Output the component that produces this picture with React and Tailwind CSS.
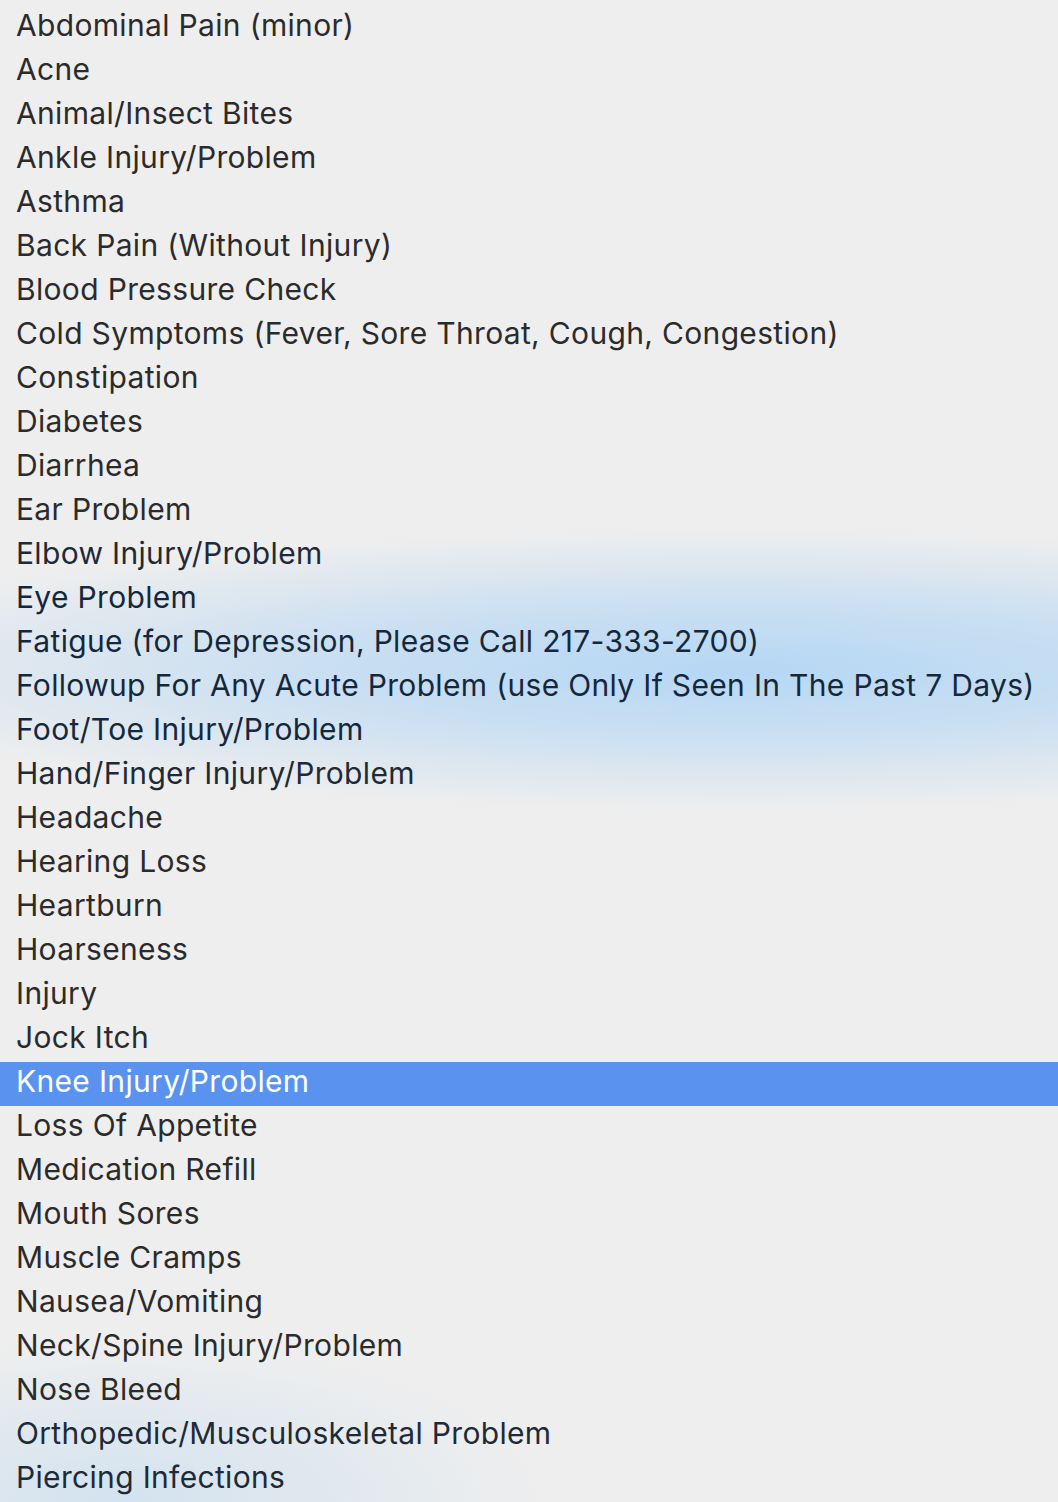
import React from "react";

const items = [
  "Abdominal Pain (minor)",
  "Acne",
  "Animal/Insect Bites",
  "Ankle Injury/Problem",
  "Asthma",
  "Back Pain (Without Injury)",
  "Blood Pressure Check",
  "Cold Symptoms (Fever, Sore Throat, Cough, Congestion)",
  "Constipation",
  "Diabetes",
  "Diarrhea",
  "Ear Problem",
  "Elbow Injury/Problem",
  "Eye Problem",
  "Fatigue (for Depression, Please Call 217-333-2700)",
  "Followup For Any Acute Problem (use Only If Seen In The Past 7 Days)",
  "Foot/Toe Injury/Problem",
  "Hand/Finger Injury/Problem",
  "Headache",
  "Hearing Loss",
  "Heartburn",
  "Hoarseness",
  "Injury",
  "Jock Itch",
  "Knee Injury/Problem",
  "Loss Of Appetite",
  "Medication Refill",
  "Mouth Sores",
  "Muscle Cramps",
  "Nausea/Vomiting",
  "Neck/Spine Injury/Problem",
  "Nose Bleed",
  "Orthopedic/Musculoskeletal Problem",
  "Piercing Infections",
];

const selected = 24;
const navy = new Set([13, 14, 15, 16]);
const semi = new Set([12, 17, 32, 33]);

export default function App() {
  return (
    <div
      className="w-[1058px] h-[1502px] overflow-hidden pt-[6px] bg-[#eeeeee]"
      style={{
        fontFamily: "Inter, 'Noto Sans', sans-serif",
        backgroundImage:
          "radial-gradient(ellipse 950px 140px at 740px 670px, rgba(178,214,245,0.95) 0%, rgba(190,218,243,0.75) 45%, rgba(238,238,238,0) 100%), radial-gradient(ellipse 420px 160px at 120px 1500px, rgba(200,222,240,0.7) 0%, rgba(238,238,238,0) 100%)",
      }}
    >
      {items.map((t, i) => (
        <div
          key={i}
          className={
            "h-[44px] flex items-center pl-[16px] text-[30px] leading-none tracking-[0.33px] whitespace-nowrap " +
            (i === selected
              ? "bg-[#5a93ef] text-white"
              : navy.has(i)
              ? "text-[#15283b]"
              : semi.has(i)
              ? "text-[#1e2a36]"
              : "text-[#2b2b2b]")
          }
        >
          <span className="-mt-[6px]">{t}</span>
        </div>
      ))}
    </div>
  );
}
